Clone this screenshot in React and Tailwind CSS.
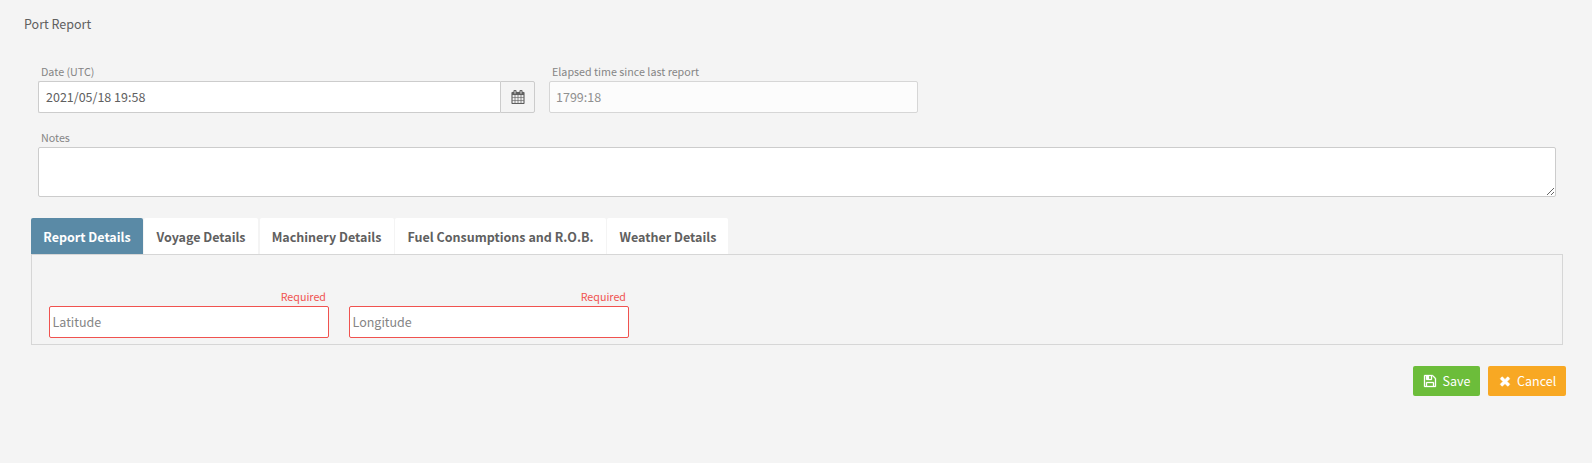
const CALENDAR =
  "M192 1664h288v-288h-288v288zm352 0h320v-288h-320v288zm-352-352h288v-320h-288v320zm352 0h320v-320h-320v320zm-352-384h288v-288h-288v288zm736 736h320v-288h-320v288zm-384-736h320v-288h-320v288zm768 736h288v-288h-288v288zm-384-352h320v-320h-320v320zm-352-864v-288q0-13-9.5-22.5t-22.5-9.5h-64q-13 0-22.5 9.5t-9.5 22.5v288q0 13 9.5 22.5t22.5 9.5h64q13 0 22.5-9.5t9.5-22.5zm736 864h288v-320h-288v320zm-384-384h320v-288h-320v288zm384 0h288v-288h-288v288zm32-480v-288q0-13-9.5-22.5t-22.5-9.5h-64q-13 0-22.5 9.5t-9.5 22.5v288q0 13 9.5 22.5t22.5 9.5h64q13 0 22.5-9.5t9.5-22.5zm384-64v1280q0 52-38 90t-90 38h-1408q-52 0-90-38t-38-90v-1280q0-52 38-90t90-38h128v-96q0-66 47-113t113-47h64q66 0 113 47t47 113v96h384v-96q0-66 47-113t113-47h64q66 0 113 47t47 113v96h128q52 0 90 38t38 90z";
const FLOPPY =
  "M512 1536h768v-384h-768v384zm896 0h128v-896q0-14-10-38.5t-20-34.5l-281-281q-10-10-34-20t-39-10v416q0 40-28 68t-68 28h-576q-40 0-68-28t-28-68v-416h-128v1280h128v-416q0-40 28-68t68-28h832q40 0 68 28t28 68v416zm-384-928v-320q0-13-9.5-22.5t-22.5-9.5h-192q-13 0-22.5 9.5t-9.5 22.5v320q0 13 9.5 22.5t22.5 9.5h192q13 0 22.5-9.5t9.5-22.5zm640 32v928q0 40-28 68t-68 28h-1344q-40 0-68-28t-28-68v-1344q0-40 28-68t68-28h928q40 0 88 20t76 48l280 280q28 28 48 76t20 88z";
const TIMES =
  "M1490 1322q0 40-28 68l-136 136q-28 28-68 28t-68-28l-294-294-294 294q-28 28-68 28t-68-28l-136-136q-28-28-28-68t28-68l294-294-294-294q-28-28-28-68t28-68l136-136q28-28 68-28t68 28l294 294 294-294q28-28 68-28t68 28l136 136q28 28 28 68t-28 68l-294 294 294 294q28 28 28 68z";

function Icon({ d, className }) {
  return (
    <svg viewBox="0 0 1792 1792" fill="currentColor" stroke="currentColor" className={className}>
      <path d={d} />
    </svg>
  );
}

const tabs = [
  { label: "Report Details", className: "w-28 bg-[#5a8aa6] text-white mr-px" },
  { label: "Voyage Details", className: "w-[114px] bg-white mr-0.5" },
  { label: "Machinery Details", className: "w-[134px] bg-white mr-px pr-px" },
  { label: "Fuel Consumptions and R.O.B.", className: "w-[211px] bg-white mr-px" },
  { label: "Weather Details", className: "w-[121px] bg-white pl-px" },
];

function Label({ children }) {
  return <label className="block h-[17px] pl-[3px] text-[10.72px] leading-[15px] text-[#858585]">{children}</label>;
}

function RequiredField({ name }) {
  return (
    <div className="w-[280px]">
      <div className="h-[17px] pr-[3px] text-right text-[10.72px] leading-[15px] text-[#f0524f]">Required</div>
      <input
        placeholder={name}
        className="block h-8 w-full rounded-xs border border-[#f0524f] bg-white px-[2.5px] pb-0.5 placeholder:text-[#858585] outline-none"
      />
    </div>
  );
}

export default function App() {
  return (
    <div className="h-[463px] w-full overflow-hidden bg-[#f4f4f4] font-['Noto_Sans_CJK_SC',sans-serif] text-[12.5px] leading-5 text-[#606060]">
      <h1 className="pt-3.5 pl-6">Port Report</h1>

      <div className="mt-[30px] flex gap-3.5 pl-[38px]">
        <div className="w-[497px]">
          <Label>Date (UTC)</Label>
          <div className="flex h-8">
            <input
              defaultValue="2021/05/18 19:58"
              className="w-[462px] rounded-l-xs border border-r-0 border-[#ccc] bg-white px-[7px] outline-none"
            />
            <button className="flex w-[35px] items-center justify-center rounded-r-xs border border-[#ccc] bg-[#f4f4f4]">
              <Icon d={CALENDAR} className="size-[14px] stroke-[20]" />
            </button>
          </div>
        </div>
        <div className="w-[369px]">
          <Label>Elapsed time since last report</Label>
          <input
            readOnly
            value="1799:18"
            className="block h-8 w-full rounded-xs border border-[#d6d6d6] bg-[#fcfcfc] px-1.5 pb-0.5 text-[#909090] outline-none"
          />
        </div>
      </div>

      <div className="mt-[17px] pr-9 pl-[38px]">
        <Label>Notes</Label>
        <textarea className="block h-[50px] w-full rounded-xs border border-[#ccc] bg-white outline-none" />
      </div>

      <div className="mt-[21px] pr-[29px] pl-[31px]">
        <div className="flex h-9 font-bold">
          {tabs.map((t) => (
            <div key={t.label} className={`flex items-center justify-center rounded-t-xs pt-0.5 whitespace-nowrap ${t.className}`}>
              {t.label}
            </div>
          ))}
        </div>
        <div className="flex h-[91px] gap-5 border border-[#d6d6d6] pt-[34px] pl-[17px]">
          <RequiredField name="Latitude" />
          <RequiredField name="Longitude" />
        </div>
      </div>

      <div className="mt-[21px] flex justify-end gap-2 pr-[26px] text-white">
        <button className="flex h-[30px] w-[67px] items-center rounded-xs bg-[#6cbd3a] pl-2.5">
          <Icon d={FLOPPY} className="mr-[5.5px] size-[14px] stroke-[40]" />
          Save
        </button>
        <button className="flex h-[30px] w-[78px] items-center rounded-xs bg-[#f8a823] pl-2.5">
          <Icon d={TIMES} className="mr-[5px] size-[14px] stroke-[60]" />
          Cancel
        </button>
      </div>
    </div>
  );
}
